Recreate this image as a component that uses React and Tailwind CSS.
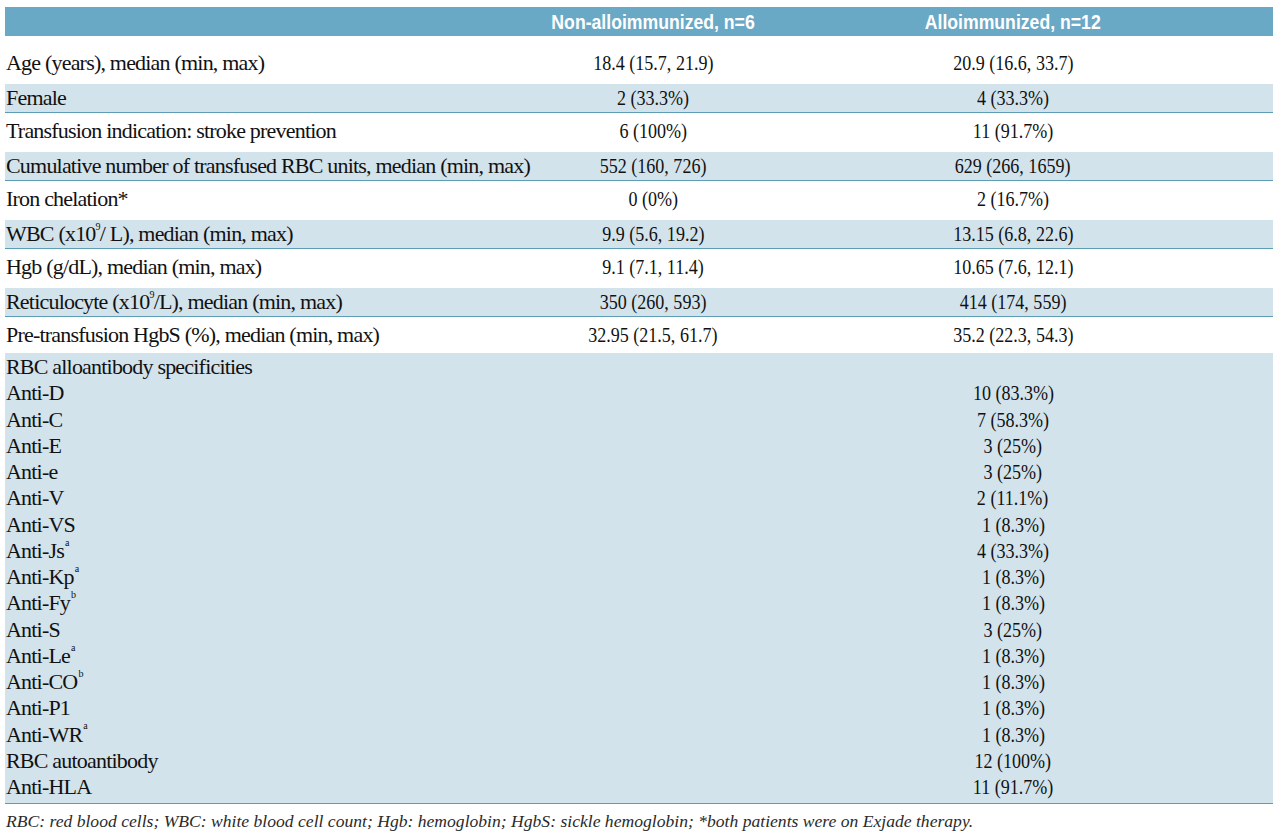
import React from "react";

const cols = "grid grid-cols-[483px_330px_390px_1fr]";

const S9 = () => (
  <sup className="text-[10px] leading-none relative -top-[3px] align-super">9</sup>
);

const topRows = [
  ["Age (years), median (min, max)", "18.4 (15.7, 21.9)", "20.9 (16.6, 33.7)", false],
  ["Female", "2 (33.3%)", "4 (33.3%)", true],
  ["Transfusion indication: stroke prevention", "6 (100%)", "11 (91.7%)", false],
  ["Cumulative number of transfused RBC units, median (min, max)", "552 (160, 726)", "629 (266, 1659)", true],
  ["Iron chelation*", "0 (0%)", "2 (16.7%)", false],
  [<>WBC (x10<S9 />/ L), median (min, max)</>, "9.9 (5.6, 19.2)", "13.15 (6.8, 22.6)", true],
  ["Hgb (g/dL), median (min, max)", "9.1 (7.1, 11.4)", "10.65 (7.6, 12.1)", false],
  [<>Reticulocyte (x10<S9 />/L), median (min, max)</>, "350 (260, 593)", "414 (174, 559)", true],
  ["Pre-transfusion HgbS (%), median (min, max)", "32.95 (21.5, 61.7)", "35.2 (22.3, 54.3)", false],
];

const Sup = ({ c }) => (
  <sup className="text-[10px] leading-none relative -top-[4px] align-super ml-[1px]">{c}</sup>
);

const specRows = [
  ["RBC alloantibody specificities", ""],
  ["Anti-D", "10 (83.3%)"],
  ["Anti-C", "7 (58.3%)"],
  ["Anti-E", "3 (25%)"],
  ["Anti-e", "3 (25%)"],
  ["Anti-V", "2 (11.1%)"],
  ["Anti-VS", "1 (8.3%)"],
  [<>Anti-Js<Sup c="a" /></>, "4 (33.3%)"],
  [<>Anti-Kp<Sup c="a" /></>, "1 (8.3%)"],
  [<>Anti-Fy<Sup c="b" /></>, "1 (8.3%)"],
  ["Anti-S", "3 (25%)"],
  [<>Anti-Le<Sup c="a" /></>, "1 (8.3%)"],
  [<>Anti-CO<Sup c="b" /></>, "1 (8.3%)"],
  ["Anti-P1", "1 (8.3%)"],
  [<>Anti-WR<Sup c="a" /></>, "1 (8.3%)"],
  ["RBC autoantibody", "12 (100%)"],
  ["Anti-HLA", "11 (91.7%)"],
];

const Val = ({ children }) => (
  <div className="text-center whitespace-nowrap">
    <span className="inline-block scale-x-[0.82]">{children}</span>
  </div>
);

function Cells({ a, b, c }) {
  return (
    <>
      <div className="pl-[1px] whitespace-nowrap tracking-[-0.8px]">{a}</div>
      {b === null ? <div></div> : <Val>{b}</Val>}
      <Val>{c}</Val>
      <div></div>
    </>
  );
}

export default function App() {
  return (
    <div className="w-[1280px] h-[838px] bg-white overflow-hidden pt-[7px] text-[#111] font-['Liberation_Serif',serif]">
      <div className="ml-[5px] w-[1268px]">
        <div className={`${cols} h-[29px] items-center bg-[#6aa9c6] text-white font-bold text-[21px] leading-none font-['Liberation_Sans',sans-serif]`}>
          <div></div>
          <div className="text-center whitespace-nowrap">
            <span className="inline-block scale-x-[0.84]">Non-alloimmunized, n=6</span>
          </div>
          <div className="text-center whitespace-nowrap">
            <span className="inline-block scale-x-[0.84]">Alloimmunized, n=12</span>
          </div>
          <div></div>
        </div>
        <div className="h-[10px]"></div>
        {topRows.map(([a, b, c, blue], i) =>
          blue ? (
            <div key={i} className="h-[34px] pt-[4px] pb-[1px]">
              <div className={`${cols} h-[29px] items-center text-[22px] leading-none bg-[#d3e3ec] border-b border-[#5e9db6]`}>
                <Cells a={a} b={b} c={c} />
              </div>
            </div>
          ) : (
            <div key={i} className={`${cols} h-[34px] items-center text-[22px] leading-none`}>
              <Cells a={a} b={b} c={c} />
            </div>
          )
        )}
        <div className="mt-[1px] bg-[#d3e3ec] border-b border-[#5e9db6] pt-[1px] pb-[3px]">
          {specRows.map(([a, c], i) => (
            <div key={i} className={`${cols} h-[26.25px] items-center text-[22px] leading-none`}>
              <Cells a={a} b={null} c={c} />
            </div>
          ))}
        </div>
        <div className="pt-[4px] pl-[1px] italic text-[17.6px] text-[#2a2a2a] whitespace-nowrap">
          RBC: red blood cells; WBC: white blood cell count; Hgb: hemoglobin; HgbS: sickle hemoglobin; *both patients were on Exjade therapy.
        </div>
      </div>
    </div>
  );
}
